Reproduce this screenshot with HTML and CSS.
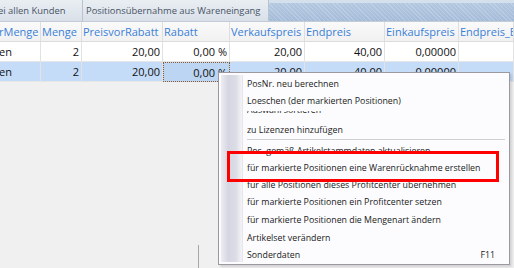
FILE: index.html
```html
<!DOCTYPE html>
<html>
<head>
<meta charset="utf-8">
<link rel="stylesheet" href="styles.css">
</head>
<body>
<div class="screen">
  <div class="tabs">
    <div class="tab tab-first"><span class="cut">ei allen Kunden</span></div>
    <div class="tab tab-second">Positionsübernahme aus Wareneingang</div>
    <div class="tabfill"></div>
  </div>
  <div class="grid">
    <div class="hcell"><span class="cut">rMenge</span></div>
    <div class="hcell">Menge</div>
    <div class="hcell">PreisvorRabatt</div>
    <div class="hcell">Rabatt</div>
    <div class="hcell">Verkaufspreis</div>
    <div class="hcell">Endpreis</div>
    <div class="hcell">Einkaufspreis</div>
    <div class="hcell">Endpreis_B</div>

    <div class="cell"><span class="cut">en</span></div>
    <div class="cell num">2</div>
    <div class="cell num">20,00</div>
    <div class="cell num">0,00 %</div>
    <div class="cell num">20,00</div>
    <div class="cell num">40,00</div>
    <div class="cell num">0,00000</div>
    <div class="cell"></div>

    <div class="cell sel"><span class="cut">en</span></div>
    <div class="cell num sel">2</div>
    <div class="cell num sel">20,00</div>
    <div class="cell num sel focus">0,00 %</div>
    <div class="cell num sel">20,00</div>
    <div class="cell num sel">40,00</div>
    <div class="cell num sel">0,00000</div>
    <div class="cell sel"></div>
  </div>
  <div class="lower">
    <div class="vline"></div>
  </div>

  <div class="menu">
    <div class="gutter"></div>
    <div class="items">
      <div class="item">PosNr. neu berechnen</div>
      <div class="item">Loeschen (der markierten Positionen)</div>
      <div class="item glitch"><span>Auswahl sortieren</span></div>
      <div class="item">zu Lizenzen hinzufügen</div>
      <div class="sep"></div>
      <div class="item">Pos. gemäß Artikelstammdaten aktualisieren</div>
      <div class="item">für markierte Positionen eine Warenrücknahme erstellen</div>
      <div class="item low">für alle Positionen dieses Profitcenter übernehmen</div>
      <div class="item low">für markierte Positionen ein Profitcenter setzen</div>
      <div class="item low">für markierte Positionen die Mengenart ändern</div>
      <div class="item low">Artikelset verändern</div>
      <div class="item low"><span>Sonderdaten</span><span class="key">F11</span></div>
    </div>
  </div>
  <div class="highlight"></div>
</div>
</body>
</html>
```
FILE: styles.css
```css
* { box-sizing: border-box; }
html, body { margin: 0; padding: 0; }
body {
  width: 514px;
  height: 268px;
  overflow: hidden;
  background: #f0f0f0;
  font-family: "Open Sans", "Noto Sans", sans-serif;
}
.screen {
  position: relative;
  width: 514px;
  height: 268px;
  display: flex;
  flex-direction: column;
  overflow: hidden;
}
.tabs {
  display: flex;
  height: 22px;
  background: #dde4ec;
  border-bottom: 1px solid #c3ccd6;
}
.tab {
  height: 100%;
  display: flex;
  align-items: center;
  font-size: 9.4px;
  color: #485466;
  background: linear-gradient(#e9eef3, #d9e0e8);
  border-right: 1px solid #b9c3cf;
  white-space: nowrap;
}
.tab-first { width: 83px; }
.tab-second { width: 186px; padding-left: 3px; }
.tabfill {
  flex: 1;
  background:
    repeating-linear-gradient(45deg, rgba(255,255,255,0.18) 0 1px, transparent 1px 3px),
    linear-gradient(#b3c7e0, #a5bcd9);
  border-top: 3px solid #d4e0ec;
}
.cut { margin-left: -2px; }
.grid {
  display: grid;
  grid-template-columns: 41px 41px 81px 67px 75px 80px 74px 1fr;
  grid-auto-rows: 20px;
  background: #fff;
}
.hcell {
  display: flex;
  align-items: center;
  padding-left: 1px;
  font-size: 11px;
  color: #3a80d6;
  background: linear-gradient(#fafafa, #f1f1f1);
  border-right: 1px solid #dedede;
  border-bottom: 1px solid #dcdcdc;
  white-space: nowrap;
  overflow: hidden;
}
.cell {
  display: flex;
  align-items: center;
  padding: 0 2px 0 1px;
  font-size: 11px;
  color: #111;
  border-right: 1px solid #e2e2e2;
  border-bottom: 1px solid #e6e6e6;
  white-space: nowrap;
  overflow: hidden;
}
.num { justify-content: flex-end; }
.sel { background: #c4dcf7; }
.focus {
  border: 1px dotted #8a5a2e;
  background: #bcd5f2;
}
.lower {
  flex: 1;
  display: flex;
  align-items: flex-end;
  background: #f0f0f0;
}
.vline {
  margin-left: 198px;
  width: 1px;
  height: 23px;
  background: #a8a8a8;
}
.menu {
  position: absolute;
  left: 218px;
  top: 72px;
  width: 292px;
  height: 193px;
  background: #fcfcfe;
  border: 1px solid #9d97a0;
  box-shadow: 2px 2px 2px rgba(0,0,0,0.12);
  display: flex;
  padding: 2px;
}
.gutter {
  width: 22px;
  background: linear-gradient(to right, #ececf2, #d6d6e2 35%, #dcdce6 70%, #f4f4f8);
  border-right: 1px solid #e6e6ea;
}
.items {
  flex: 1;
  display: flex;
  flex-direction: column;
  padding-left: 4px;
  padding-right: 10px;
}
.item {
  height: 17px;
  flex: none;
  display: flex;
  align-items: center;
  justify-content: space-between;
  font-size: 8.8px;
  color: #1a1a1a;
  white-space: nowrap;
}
.item.low { height: 17.6px; }
.glitch {
  height: 10px;
  margin-top: 2px;
  overflow: hidden;
  align-items: flex-start;
}
.glitch span {
  display: block;
  line-height: 17px;
  margin-top: -9px;
}
.sep {
  height: 3px;
  flex: none;
  border-top: 1px solid #cfcfd4;
  margin-top: 1px;
  margin-right: -8px;
}
.key { margin-right: 2px; }
.highlight {
  position: absolute;
  left: 227px;
  top: 151px;
  width: 272px;
  height: 31px;
  border: 3.5px solid #ff0000;
}
```
